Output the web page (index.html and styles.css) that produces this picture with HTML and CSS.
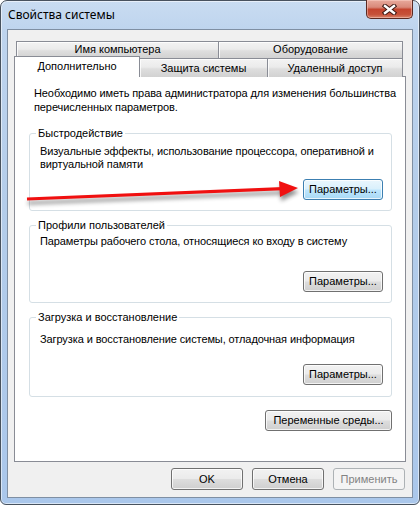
FILE: index.html
```html
<!DOCTYPE html>
<html lang="ru">
<head>
    <meta charset="UTF-8">
    <title>Свойства системы</title>
    <link rel="stylesheet" href="styles.css">
</head>
<body>

<div class="window">
    <div class="titlebar">
        <span class="title">Свойства системы</span>
        <button class="close" aria-label="Закрыть">
            <svg width="15" height="11" viewBox="0 0 15 11">
                <path d="M3 2 L12 9 M12 2 L3 9" stroke="#3b1712" stroke-width="4.4" stroke-linecap="square"/>
                <path d="M3 2 L12 9 M12 2 L3 9" stroke="#fff" stroke-width="2.4" stroke-linecap="square"/>
            </svg>
        </button>
    </div>

    <div class="client">
        <div class="tabs">
            <div class="tab-row back">
                <div class="tab tab-name">Имя компьютера</div>
                <div class="tab tab-hw">Оборудование</div>
            </div>
            <div class="tab-row front">
                <div class="tab selected tab-adv">Дополнительно</div>
                <div class="tab tab-prot">Защита системы</div>
                <div class="tab tab-remote">Удаленный доступ</div>
            </div>
        </div>

        <div class="panel">
            <p class="intro">Необходимо иметь права администратора для изменения большинства<br>перечисленных параметров.</p>

            <div class="group g-perf">
                <div class="group-title">Быстродействие</div>
                <p>Визуальные эффекты, использование процессора, оперативной и<br>виртуальной памяти</p>
                <div class="group-actions"><button class="btn focused">Параметры...</button></div>
            </div>

            <div class="group g-prof">
                <div class="group-title">Профили пользователей</div>
                <p>Параметры рабочего стола, относящиеся ко входу в систему</p>
                <div class="group-actions"><button class="btn">Параметры...</button></div>
            </div>

            <div class="group g-boot">
                <div class="group-title">Загрузка и восстановление</div>
                <p>Загрузка и восстановление системы, отладочная информация</p>
                <div class="group-actions"><button class="btn">Параметры...</button></div>
            </div>

            <div class="panel-actions"><button class="btn btn-env">Переменные среды...</button></div>
        </div>

        <div class="dialog-actions">
            <button class="btn btn-dlg">OK</button>
            <button class="btn btn-dlg">Отмена</button>
            <button class="btn btn-dlg" disabled>Применить</button>
        </div>
    </div>

    <!-- red annotation arrow drawn over the dialog -->
    <svg class="arrow" width="420" height="505" viewBox="0 0 420 505">
        <g class="arrow-shape">
            <line x1="27" y1="199" x2="283" y2="188.6" stroke="#f01010" stroke-width="3.2"/>
            <polygon points="298,188 279,181 280,197" fill="#f01010"/>
        </g>
    </svg>
</div>

</body>
</html>
```

FILE: styles.css
```css
* {
    box-sizing: border-box;
}

body {
    margin: 0;
    font-family: "Liberation Sans", Arial, sans-serif;
    font-size: 11px;
    color: #000;
    background: #fff;
}

p {
    margin: 0;
    white-space: nowrap;
    letter-spacing: -0.1px;
}

/* Window frame */
.window {
    width: 420px;
    height: 505px;
    border: 1px solid #48525e;
    border-radius: 7px 7px 6px 6px;
    background: linear-gradient(180deg, #c9dcf1 0%, #bed4ee 6%, #b4cdea 40%, #aac7eb 100%);
    box-shadow: inset 0 0 0 1px rgba(255, 255, 255, 0.55);
    padding: 0 6px 6px;
    display: flex;
    flex-direction: column;
    position: relative;
}

.titlebar {
    height: 28px;
    display: flex;
    justify-content: space-between;
    align-items: flex-start;
}

.title {
    font-family: "Noto Sans", "Open Sans", sans-serif;
    font-size: 12px;
    line-height: 16px;
    padding: 6px 0 0 1px;
    color: #000;
}

.close {
    width: 47px;
    height: 19px;
    margin-top: -1px;
    padding: 0;
    border: 1px solid #5b2a22;
    border-top: none;
    border-radius: 0 0 5px 5px;
    background: linear-gradient(180deg, #e8aa9c 0%, #d9897a 40%, #c4452f 52%, #c65139 80%, #d8836a 100%);
    box-shadow: inset 0 0 0 1px rgba(255, 220, 210, 0.45);
    display: flex;
    align-items: center;
    justify-content: center;
}

.close svg {
    display: block;
}

.client {
    flex: 1;
    border: 1px solid #7f8fa3;
    background: #f0f0f0;
    padding: 11px 6px 7px;
    display: flex;
    flex-direction: column;
}

/* Tabs */
.tab-row {
    display: flex;
    align-items: flex-end;
}

.tab-row.back {
    padding-left: 2px;
}

.tab-row.front {
    margin-top: -2px;
    margin-bottom: -1px;
    height: 21px;
    position: relative;
    z-index: 1;
}

.tab {
    border: 1px solid #898c95;
    border-bottom: none;
    background: linear-gradient(180deg, #f3f3f3 0%, #ebebeb 45%, #dedede 55%, #d2d2d2 100%);
    box-shadow: inset 1px 1px 0 rgba(255, 255, 255, 0.8);
    text-align: center;
}

.tab + .tab {
    margin-left: -1px;
}

.back .tab {
    height: 17px;
    line-height: 15px;
}

.front .tab {
    height: 19px;
    line-height: 18px;
}

.front .tab.selected {
    height: 21px;
    line-height: 18px;
    background: #fff;
    box-shadow: none;
    position: relative;
    z-index: 2;
}

.tab-name { width: 203px; }
.tab-hw { width: 185px; }
.tab-adv { width: 126px; }
.tab-prot { width: 129px; }
.tab-remote { width: 136px; }

/* Tab page */
.panel {
    height: 386px;
    border: 1px solid #898c95;
    background: #fff;
    padding: 9px 13px 0 14px;
}

.intro {
    line-height: 14px;
    padding-left: 5px;
}

.group {
    border: 1px solid #d5dfe5;
    border-radius: 3px;
    padding: 0 8px 10px 10px;
    display: flex;
    flex-direction: column;
    height: 78px;
    margin-top: 14px;
}

.g-perf {
    margin-top: 19px;
}

.g-boot {
    height: 80px;
    padding-bottom: 11px;
}

.group-title {
    align-self: flex-start;
    margin: -8px 0 0 -4px;
    padding: 0 2px;
    background: #fff;
    line-height: 14px;
}

.group p {
    line-height: 13px;
    margin-top: 5px;
}

.g-prof p {
    margin-top: 3px;
}

.g-boot p {
    margin-top: 9px;
}

.group-actions {
    margin-top: auto;
    display: flex;
    justify-content: flex-end;
}

.panel-actions {
    margin-top: 13px;
    display: flex;
    justify-content: flex-end;
}

.dialog-actions {
    margin-top: 6px;
    display: flex;
    justify-content: flex-end;
    gap: 9px;
    padding-right: 1px;
}

/* Buttons */
.btn {
    font: inherit;
    color: #000;
    height: 21px;
    width: 80px;
    padding: 0 0 1px;
    border: 1px solid #707070;
    border-radius: 3px;
    background: linear-gradient(180deg, #f2f2f2 0%, #ebebeb 48%, #dddddd 52%, #cfcfcf 100%);
    box-shadow: inset 0 0 0 1px rgba(255, 255, 255, 0.75);
}

.btn.focused {
    border-color: #3c7fb1;
    background: linear-gradient(180deg, #eaf6fd 0%, #d9f0fc 48%, #bee6fd 52%, #a7d9f5 100%);
}

.btn-env {
    width: 127px;
}

.btn-dlg {
    width: 72px;
    height: 22px;
}

.btn:disabled {
    color: #838383;
    border-color: #adb2b5;
    background: #f4f4f4;
    box-shadow: none;
}

/* Annotation overlay */
.arrow {
    position: absolute;
    left: -1px;
    top: -1px;
    pointer-events: none;
}

.arrow-shape {
    filter: drop-shadow(1px 4px 2px rgba(0, 0, 0, 0.45));
}
```
